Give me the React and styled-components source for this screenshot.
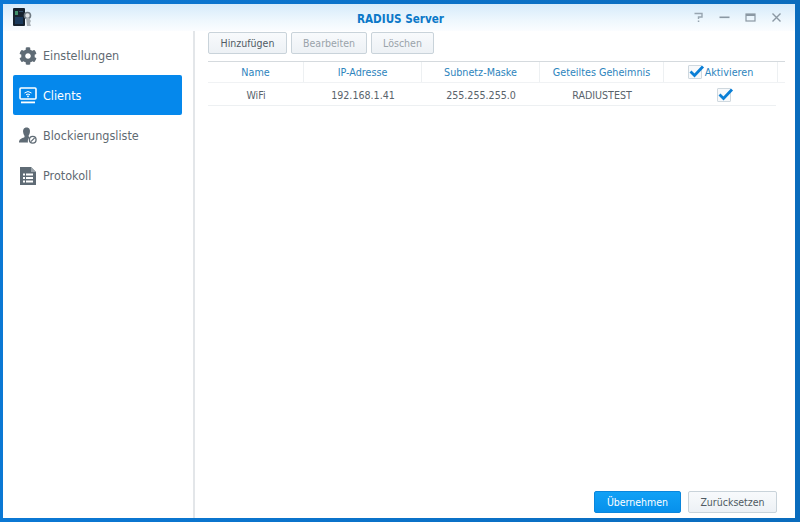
import React from "react";
import styled, {createGlobalStyle} from "styled-components";
import {FaCog} from "react-icons/fa";


const GlobalStyle = createGlobalStyle`
  html, body {
    margin: 0;
    padding: 0;
  }

  * {
    box-sizing: border-box;
  }
`;


const Frame = styled.div`
  width: 800px;
  height: 522px;
  background: linear-gradient(90deg, #0b78d4 0%, #0a6cbd 100%);
  padding: 4px 5px 4px 3px;
  font-family: "DejaVu Sans Condensed", "DejaVu Sans", Verdana, sans-serif;
  font-stretch: condensed;
  font-size: 11px;
  color: #4f5a63;
  overflow: hidden;
`;

const Window = styled.div`
  width: 100%;
  height: 100%;
  background: #fff;
  display: flex;
  flex-direction: column;
`;

const TitleBar = styled.div`
  height: 27px;
  flex: none;
  padding: 0 9px 0 10px;
  background: linear-gradient(180deg, #d6ebfa 0%, #eef7fd 60%, #fbfdff 100%);
  display: flex;
  align-items: center;
  justify-content: space-between;
  position: relative;
`;

const Title = styled.div`
  position: absolute;
  left: 3px;
  right: 0;
  text-align: center;
  top: 8px;
  font-size: 11.6px;
  font-weight: bold;
  color: #0b78c8;
`;

const WindowButtons = styled.div`
  display: flex;
  align-items: center;
  gap: 15px;
  padding-right: 4px;
`;

const Body = styled.div`
  flex: 1;
  display: flex;
  min-height: 0;
`;

const Sidebar = styled.ul`
  width: 192px;
  flex: none;
  margin: 0;
  padding: 4px 11px 0 10px;
  list-style: none;
  border-right: 2px solid #e3e6e9;
`;

const NavItem = styled.li`
  height: 40px;
  display: flex;
  align-items: center;
  gap: 6px;
  padding: 1px 0 0 6px;
  border-radius: 2px;
  font-size: 12.5px;
  background: ${props => props.$active ? "#0588ec" : "transparent"};
  color: ${props => props.$active ? "#fff" : "#5f6a72"};
`;

const NavIcon = styled.span`
  width: 18px;
  height: 20px;
  flex: none;
  display: flex;
  align-items: center;
  justify-content: center;
`;

const Main = styled.div`
  flex: 1;
  display: flex;
  flex-direction: column;
  padding: 1px 0 5px 13px;
  min-width: 0;
`;

const Toolbar = styled.div`
  display: flex;
  gap: 4px;
  height: 22px;
  flex: none;
`;

const Button = styled.button`
  height: 22px;
  width: ${props => props.$width}px;
  padding: 0;
  border-radius: 2px;
  border: 1px solid #c9d3da;
  background: linear-gradient(180deg, #f8fafc 0%, #edf1f5 100%);
  font-family: inherit;
  font-stretch: inherit;
  font-size: 10.5px;
  color: ${props => props.disabled ? "#9aa3aa" : "#4f5a63"};
`;

const PrimaryButton = styled(Button)`
  border-color: #0a86dc;
  background: linear-gradient(180deg, #11a1f6 0%, #0790ec 100%);
  color: #fff;
`;

const HeaderRow = styled.div`
  margin-top: 7px;
  width: 577px;
  height: 22px;
  flex: none;
  display: grid;
  grid-template-columns: 96px 118px 118px 124px 114px 7px;
  border-top: 1px solid #d5dade;
  border-bottom: 1px solid #f0f2f4;
`;

const HeaderCell = styled.div`
  display: flex;
  align-items: center;
  justify-content: center;
  gap: 3px;
  font-size: 10.7px;
  color: #2d84bd;
  border-right: ${props => props.$last ? "none" : "1px solid #edf0f2"};
`;

const Row = styled.div`
  width: 568px;
  height: 23px;
  flex: none;
  display: grid;
  grid-template-columns: 96px 118px 118px 124px 112px;
  border-bottom: 1px solid #edf0f2;
`;

const Cell = styled.div`
  display: flex;
  align-items: center;
  justify-content: center;
  padding: 1px 0 0 ${props => props.$indent || 0}px;
  font-size: 10.6px;
  color: #59636b;
`;

const Footer = styled.div`
  margin-top: auto;
  display: flex;
  justify-content: flex-end;
  gap: 7px;
  padding-right: 18px;
`;

const CheckBox = styled.span`
  width: 14px;
  height: 14px;
  display: block;
  position: relative;
  border: 1px solid #cfd8de;
  border-radius: 1px;
  background: #f7f9fb;

  svg {
    position: absolute;
    left: -1px;
    top: -2px;
  }
`;


const Check = () => (
    <CheckBox>
        <svg width="17" height="15" viewBox="0 0 17 15">
            <path d="M2.5 7.5 L6.5 11.5 L15 2.5" fill="none" stroke="#0a7fd6" strokeWidth="2.8"/>
        </svg>
    </CheckBox>
);

const AppIcon = () => (
    <svg width="20" height="19" viewBox="0 0 20 19">
        <rect x="0" y="0" width="12" height="18" rx="1" fill="#16222e"/>
        <rect x="2" y="3" width="3" height="4" fill="#3e8f6a"/>
        <rect x="6" y="3" width="4" height="1" fill="#34506b"/>
        <rect x="2" y="9" width="8" height="7" fill="#1b3a5c"/>
        <circle cx="14.5" cy="7.5" r="3" fill="#dfe3e6" stroke="#6f7a82" strokeWidth="1.6"/>
        <path d="M13 10 L14 18 H18 L17 15 L18 13 L16 10 Z" fill="#aab2b8"/>
    </svg>
);

const HelpIcon = () => (
    <svg width="11" height="11" viewBox="0 0 11 11">
        <path d="M1.5 1.5 H9 V5 H5.5 V7" fill="none" stroke="#98a5b0" strokeWidth="1.4"/>
        <rect x="4.8" y="8.5" width="1.5" height="1.5" fill="#98a5b0"/>
    </svg>
);

const MinimizeIcon = () => (
    <svg width="11" height="11" viewBox="0 0 11 11">
        <rect x="0.5" y="4.5" width="10" height="1.6" fill="#8b98a3"/>
    </svg>
);

const MaximizeIcon = () => (
    <svg width="11" height="11" viewBox="0 0 11 11">
        <rect x="1" y="2" width="9" height="7" fill="none" stroke="#8b98a3" strokeWidth="1.2"/>
        <rect x="1" y="2" width="9" height="2" fill="#8b98a3"/>
    </svg>
);

const CloseIcon = () => (
    <svg width="11" height="11" viewBox="0 0 11 11">
        <path d="M1.5 1.5 L9.5 9.5 M9.5 1.5 L1.5 9.5" stroke="#8b98a3" strokeWidth="1.4"/>
    </svg>
);

const ClientsIcon = () => (
    <svg width="18" height="17" viewBox="0 0 18 17">
        <rect x="1" y="1" width="16" height="11" rx="1" fill="none" stroke="#fff" strokeWidth="1.6"/>
        <path d="M5.5 6 Q9 3 12.5 6 M7 7.8 Q9 6.2 11 7.8" fill="none" stroke="#fff" strokeWidth="1"/>
        <circle cx="9" cy="9.4" r="0.9" fill="#fff"/>
        <rect x="2" y="14.5" width="14" height="1.8" fill="#fff"/>
    </svg>
);

const BlockIcon = () => (
    <svg width="19" height="19" viewBox="0 0 19 19">
        <path d="M8 1 C11 1 12 3.5 11.5 6 C11.2 8 10.5 9 10 10 L11 11.5 C9.5 13 9 15 9.5 17 H0 C0 13.5 2 12.5 5.5 11.5 L6 10 C5.2 9 4.5 7.5 4.4 6 C4 3.5 5 1 8 1 Z" fill="#5f6b75"/>
        <circle cx="14.5" cy="14" r="3.5" fill="#fff" stroke="#5f6b75" strokeWidth="1.4"/>
        <path d="M12.5 16 L16.5 12" stroke="#5f6b75" strokeWidth="1.3"/>
    </svg>
);

const LogIcon = () => (
    <svg width="16" height="18" viewBox="0 0 16 18">
        <path d="M0 0 H11 L16 5 V18 H0 Z" fill="#5f6b75"/>
        <path d="M11 0 L16 5 H11 Z" fill="#9aa3aa"/>
        <g fill="#fff">
            <rect x="3" y="6.5" width="2" height="2"/>
            <rect x="6" y="6.5" width="7" height="2"/>
            <rect x="3" y="10" width="2" height="2"/>
            <rect x="6" y="10" width="7" height="2"/>
            <rect x="3" y="13.5" width="2" height="2"/>
            <rect x="6" y="13.5" width="7" height="2"/>
        </g>
    </svg>
);


const App = () => {
    return (
        <Frame>
            <GlobalStyle/>
            <Window>
                <TitleBar>
                    <AppIcon/>
                    <Title>RADIUS Server</Title>
                    <WindowButtons>
                        <HelpIcon/>
                        <MinimizeIcon/>
                        <MaximizeIcon/>
                        <CloseIcon/>
                    </WindowButtons>
                </TitleBar>
                <Body>
                    <Sidebar>
                        <NavItem>
                            <NavIcon><FaCog size={18} color="#5f6b75"/></NavIcon>
                            Einstellungen
                        </NavItem>
                        <NavItem $active>
                            <NavIcon><ClientsIcon/></NavIcon>
                            Clients
                        </NavItem>
                        <NavItem>
                            <NavIcon><BlockIcon/></NavIcon>
                            Blockierungsliste
                        </NavItem>
                        <NavItem>
                            <NavIcon><LogIcon/></NavIcon>
                            Protokoll
                        </NavItem>
                    </Sidebar>
                    <Main>
                        <Toolbar>
                            <Button $width={79}>Hinzufügen</Button>
                            <Button $width={76} disabled>Bearbeiten</Button>
                            <Button $width={63} disabled>Löschen</Button>
                        </Toolbar>
                        <HeaderRow>
                            <HeaderCell>Name</HeaderCell>
                            <HeaderCell>IP-Adresse</HeaderCell>
                            <HeaderCell>Subnetz-Maske</HeaderCell>
                            <HeaderCell>Geteiltes Geheimnis</HeaderCell>
                            <HeaderCell><Check/>Aktivieren</HeaderCell>
                            <HeaderCell $last/>
                        </HeaderRow>
                        <Row>
                            <Cell>WiFi</Cell>
                            <Cell>192.168.1.41</Cell>
                            <Cell>255.255.255.0</Cell>
                            <Cell>RADIUSTEST</Cell>
                            <Cell $indent={8}><Check/></Cell>
                        </Row>
                        <Footer>
                            <PrimaryButton $width={87}>Übernehmen</PrimaryButton>
                            <Button $width={89}>Zurücksetzen</Button>
                        </Footer>
                    </Main>
                </Body>
            </Window>
        </Frame>
    );
};


export default App;
